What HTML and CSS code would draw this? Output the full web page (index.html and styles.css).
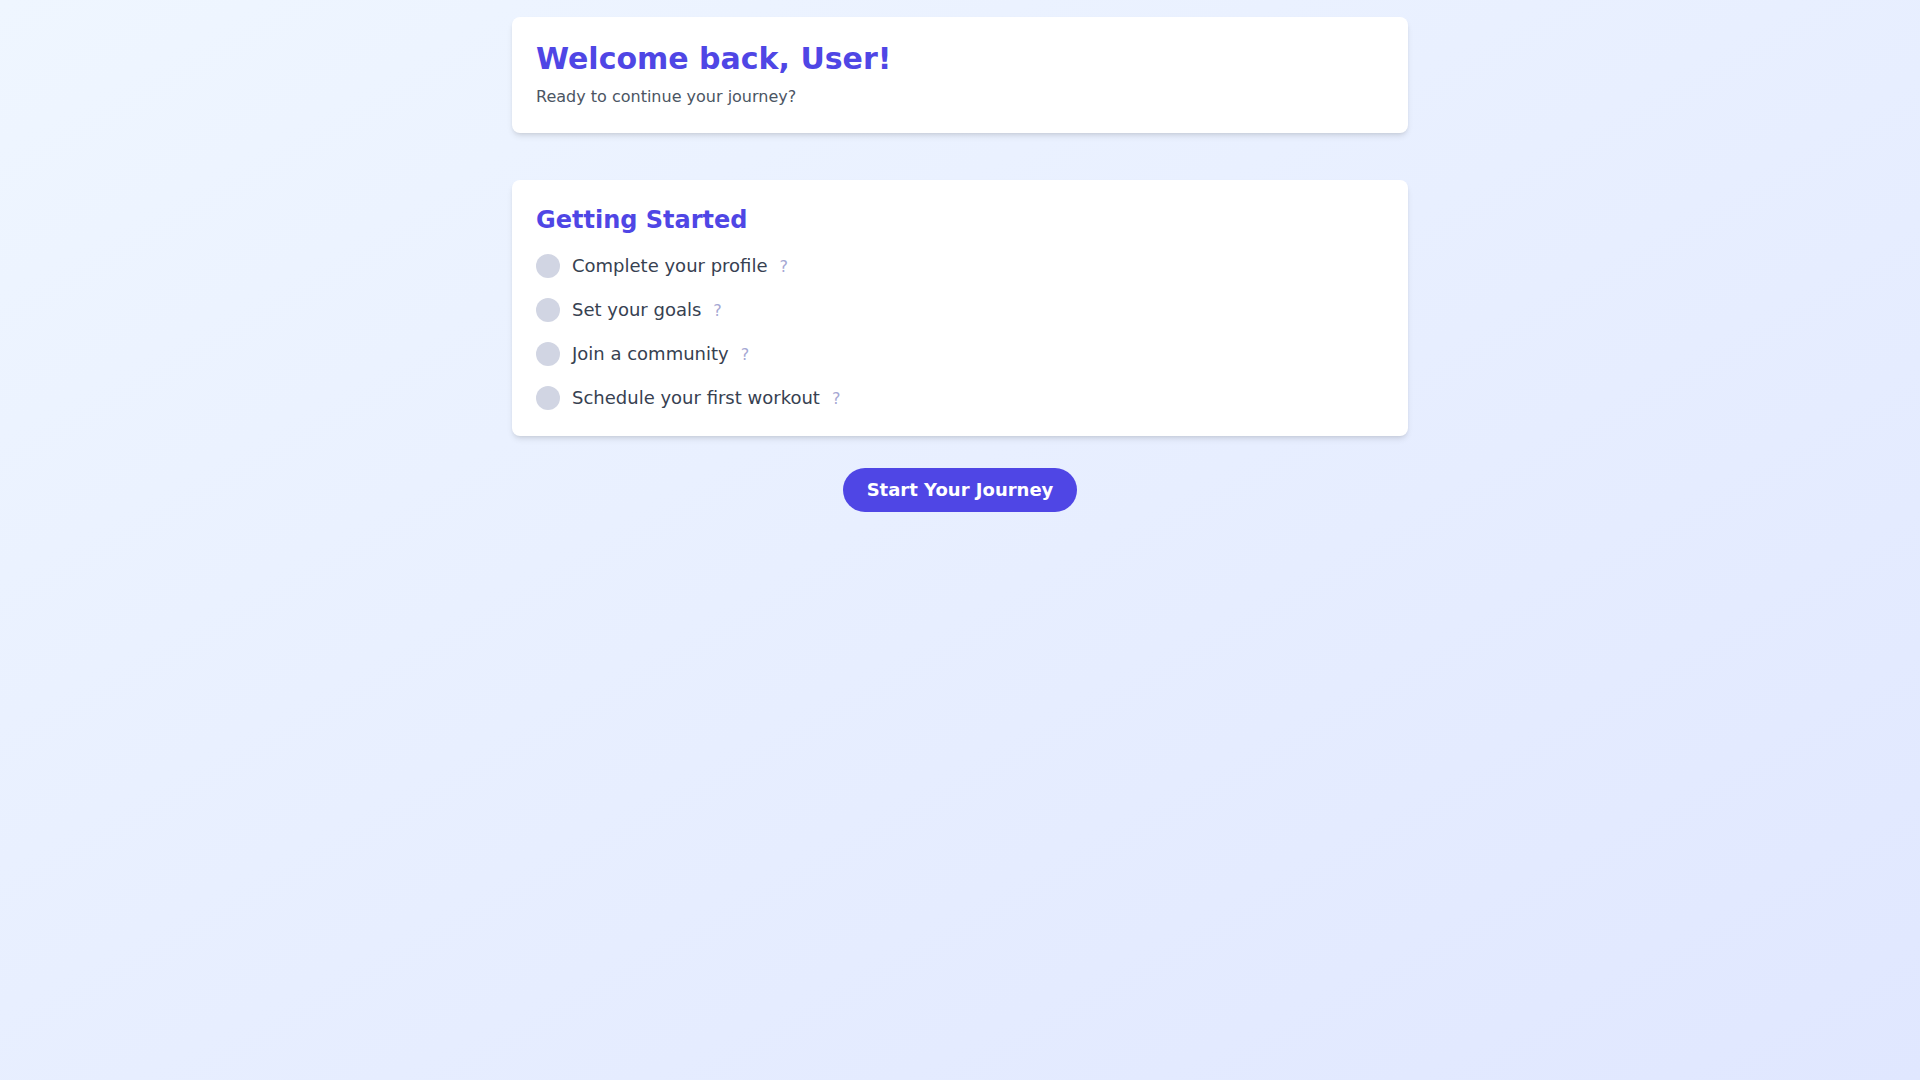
FILE: index.html
```html
<!DOCTYPE html>
<html lang="en">
<head>
  <meta charset="UTF-8" />
  <meta name="viewport" content="width=device-width, initial-scale=1.0">
  <title>Welcome back</title>
  <link rel="stylesheet" href="styles.css">
</head>
<body>
  <main class="page">
    <section class="card welcome">
      <h1>Welcome back, User!</h1>
      <p class="sub">Ready to continue your journey?</p>
    </section>

    <section class="card steps">
      <h2>Getting Started</h2>
      <ul class="step-list">
        <li><span class="dot"></span><span class="label">Complete your profile</span><span class="hint">?</span></li>
        <li><span class="dot"></span><span class="label">Set your goals</span><span class="hint">?</span></li>
        <li><span class="dot"></span><span class="label">Join a community</span><span class="hint">?</span></li>
        <li><span class="dot"></span><span class="label">Schedule your first workout</span><span class="hint">?</span></li>
      </ul>
    </section>

    <div class="actions">
      <button class="start-btn">Start Your Journey</button>
    </div>
  </main>
</body>
</html>
```

FILE: styles.css
```css
* { box-sizing: border-box; }
html, body { height: 100%; }
body { margin: 0; font-family: "DejaVu Sans", sans-serif; background: linear-gradient(to bottom right, #eff6ff, #e0e7ff); min-height: 100vh; }
.page { width: 896px; margin: 0 auto; padding-top: 17px; }
.card { background: #fff; border-radius: 8px; padding: 24px; box-shadow: 0 4px 6px -1px rgba(0,0,0,0.1), 0 2px 4px -2px rgba(0,0,0,0.1); }
.welcome { margin-bottom: 47px; }
h1 { margin: 0; font-size: 30px; line-height: 36px; font-weight: bold; color: #4f46e5; }
.sub { margin: 8px 0 0; font-size: 16px; line-height: 24px; color: #4b5563; }
h2 { margin: 0 0 16px; font-size: 24px; line-height: 32px; font-weight: bold; color: #4f46e5; }
.step-list { list-style: none; margin: 0; padding: 0; display: flex; flex-direction: column; gap: 16px; }
.step-list li { display: flex; align-items: center; height: 28px; }
.dot { width: 24px; height: 24px; border-radius: 50%; background: #d1d5e3; margin-right: 12px; flex-shrink: 0; }
.label { font-size: 18px; line-height: 28px; color: #374151; }
.hint { margin-left: 12px; font-size: 16px; color: #a5a7d3; }
.actions { display: flex; justify-content: center; margin-top: 32px; }
.start-btn { font-family: inherit; font-size: 18px; line-height: 28px; font-weight: bold; color: #fff; background: #4f46e5; border: none; border-radius: 9999px; padding: 8px 24px; cursor: pointer; }
```
